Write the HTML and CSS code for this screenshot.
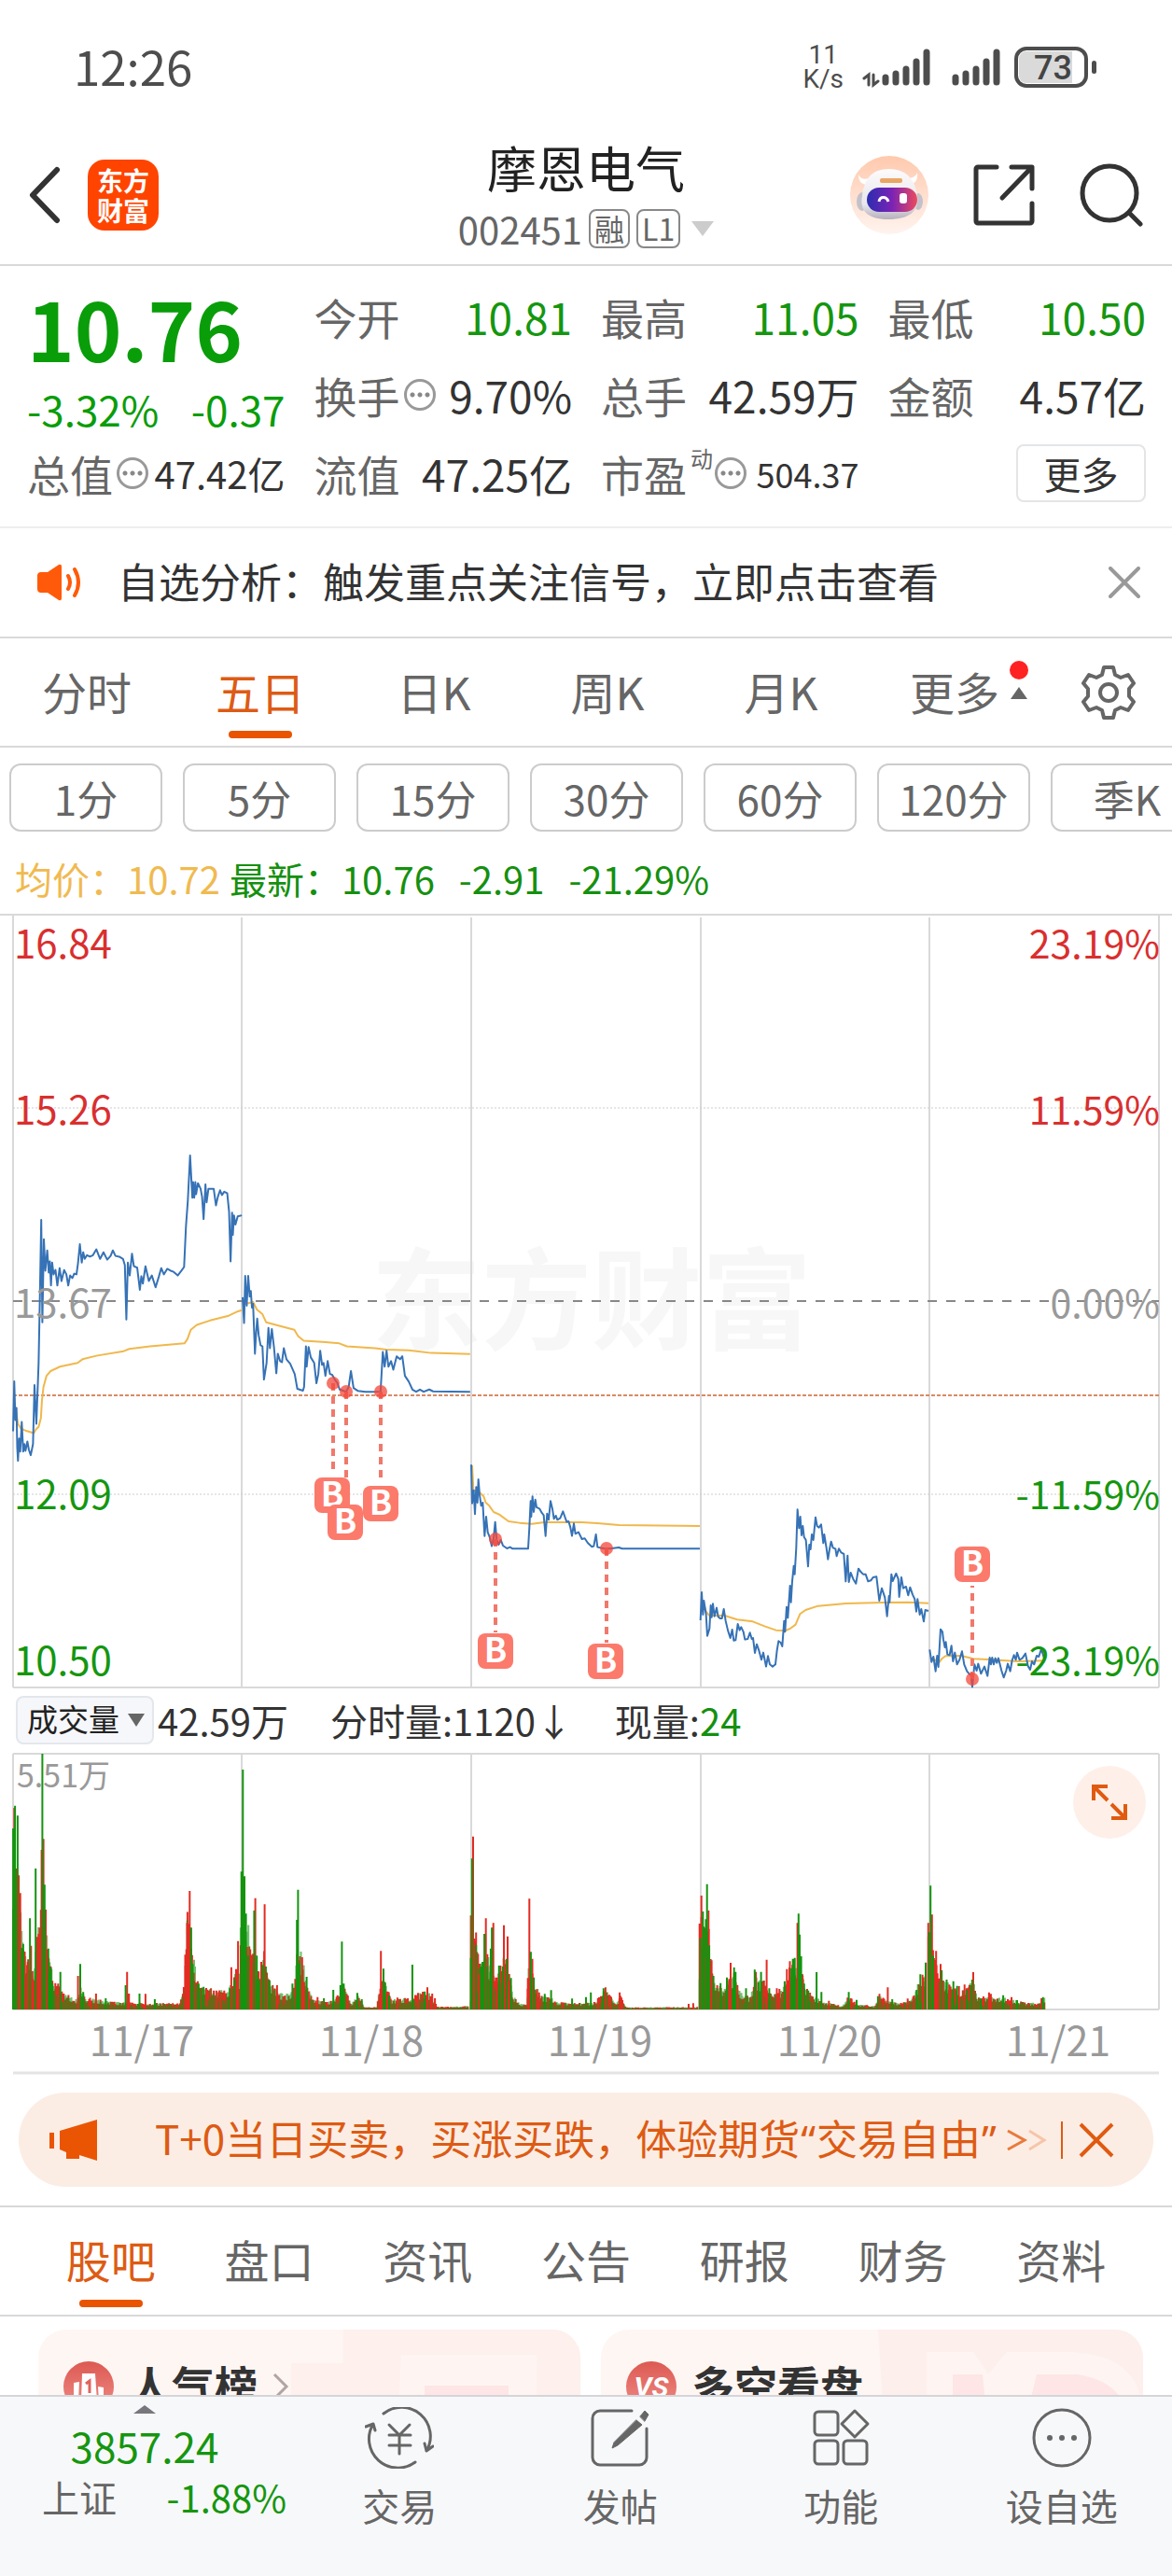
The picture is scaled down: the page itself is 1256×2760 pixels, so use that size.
FILE: index.html
```html
<!DOCTYPE html>
<html lang="zh-CN">
<head>
<meta charset="utf-8">
<meta name="viewport" content="width=device-width, initial-scale=1">
<title>摩恩电气 002451</title>
<link rel="stylesheet" href="styles.css">
</head>
<body>
<div class="app">
  <div class="status">
    <span class="status-time">12:26</span>
    <div class="status-icons">
      <span class="net-speed"><span>11</span><span>K/s</span></span>
      <svg class="signals" width="148" height="44" viewBox="0 0 148 44" fill="none" stroke="#4d4d4d" stroke-width="7" stroke-linecap="round">
        <path d="M7 41V30l-5 4M12 30v11l5-4" stroke-width="3"/>
        <path d="M25 38v-5M36 38v-9M47 38V24M58 38V16M69 38V6M100 38v-5M111 38v-9M122 38V24M133 38V16M144 38V6"/>
      </svg>
      <span class="battery"><span class="battery-level">73</span></span>
    </div>
  </div>

  <header class="header">
    <div class="header-left">
      <button class="icon-btn" aria-label="返回">
        <svg width="34" height="62" viewBox="0 0 34 62" fill="none" stroke="#333" stroke-width="6" stroke-linecap="round" stroke-linejoin="round"><path d="M30 4 4 31l26 27"/></svg>
      </button>
      <a class="logo" href="#home"><span>东方</span><span>财富</span></a>
    </div>
    <div class="title">
      <h1>摩恩电气</h1>
      <div class="code"><span>002451</span><span class="badge">融</span><span class="badge">L1</span><i class="tri-down code-tri"></i></div>
    </div>
    <div class="header-right">
      <button class="icon-btn" aria-label="智能助手">
        <svg width="84" height="84" viewBox="0 0 84 84">
          <defs>
            <linearGradient id="halo" x1="0" y1="0" x2="0" y2="1"><stop offset="0" stop-color="#ffc9ad"/><stop offset="1" stop-color="#fff4ef"/></linearGradient>
            <linearGradient id="visor"><stop offset="0" stop-color="#2b2db0"/><stop offset=".5" stop-color="#7b23b5"/><stop offset="1" stop-color="#ec4a5c"/></linearGradient>
            <linearGradient id="helmet" x1="0" y1="0" x2="0" y2="1"><stop offset="0" stop-color="#fdfbfb"/><stop offset=".7" stop-color="#e9e6ec"/><stop offset="1" stop-color="#b5b1bd"/></linearGradient>
          </defs>
          <circle cx="42" cy="42" r="42" fill="url(#halo)"/>
          <path d="M9 20c0 7 3 11 10 11l5-8c-8 3-13 2-15-3zM72 18c1 7-2 12-8 13l-7-8c8 2 13 0 15-5z" fill="#fff"/>
          <ellipse cx="13" cy="49" rx="6" ry="10" fill="#c4c1cb"/><ellipse cx="73" cy="49" rx="5" ry="9" fill="#c4c1cb"/>
          <path d="M42 14c20 0 29 14 30 30 2 15-8 24-31 24S10 58 13 43c2-18 10-29 29-29z" fill="url(#helmet)"/>
          <rect x="32" y="24" width="24" height="5" rx="2" fill="#e9a765"/>
          <rect x="18" y="34" width="54" height="26" rx="13" fill="url(#visor)"/>
          <path d="M31 49c1-6 8-6 10 0" fill="none" stroke="#fff" stroke-width="3"/><rect x="53" y="40" width="8" height="11" rx="3" fill="#fff"/>
        </svg>
      </button>
      <button class="icon-btn" aria-label="分享">
        <svg width="66" height="66" viewBox="0 0 66 66" fill="none" stroke="#333" stroke-width="5" stroke-linecap="round" stroke-linejoin="round"><path d="M25 3H5a2 2 0 0 0-2 2v56a2 2 0 0 0 2 2h56a2 2 0 0 0 2-2V42M41 3h22v23M62 4 31 36"/></svg>
      </button>
      <button class="icon-btn" aria-label="搜索">
        <svg width="68" height="68" viewBox="0 0 68 68" fill="none" stroke="#333" stroke-width="5" stroke-linecap="round"><circle cx="32" cy="32" r="29"/><path d="m53 53 12 12"/></svg>
      </button>
    </div>
  </header>

  <main class="main">
    <section class="quote">
      <div class="quote-price"><strong>10.76</strong><p><span>-3.32%</span><span>-0.37</span></p></div>
      <div class="cell"><span class="label">今开</span><span class="green">10.81</span></div>
      <div class="cell"><span class="label">最高</span><span class="green">11.05</span></div>
      <div class="cell"><span class="label">最低</span><span class="green">10.50</span></div>
      <div class="cell"><span class="label">换手<i class="dots"></i></span><span>9.70%</span></div>
      <div class="cell"><span class="label">总手</span><span>42.59万</span></div>
      <div class="cell"><span class="label">金额</span><span>4.57亿</span></div>
      <div class="cell"><span class="label">总值<i class="dots"></i></span><span class="mid">47.42亿</span></div>
      <div class="cell"><span class="label">流值</span><span>47.25亿</span></div>
      <div class="cell"><span class="label">市盈<sup>动</sup><i class="dots"></i></span><span class="small">504.37</span></div>
      <div class="cell cell-end"><button class="more-btn">更多</button></div>
    </section>

    <section class="notice">
      <svg width="50" height="40" viewBox="0 0 50 40" fill="none" stroke="#ff5a0a" stroke-width="4" stroke-linecap="round"><path d="M2 13q0-4 4-4h7L25 1q3-1 3 2v34q0 3-3 2l-12-8H6q-4 0-4-4z" fill="#ff5a0a" stroke="none"/><path d="M35 13q4 7 0 14M42 6q8 14 0 28"/></svg>
      <p>自选分析：触发重点关注信号，立即点击查看</p>
      <button class="icon-btn" aria-label="关闭"><svg width="34" height="34" viewBox="0 0 34 34" stroke="#999" stroke-width="4" stroke-linecap="round"><path d="m2 2 30 30M32 2 2 32"/></svg></button>
    </section>

    <nav class="periods">
      <a href="#m">分时</a><a href="#5d" class="active">五日</a><a href="#d">日K</a><a href="#w">周K</a><a href="#mo">月K</a>
      <a href="#more" class="has-dot">更多<i class="tri-up"></i></a>
      <button class="icon-btn gear" aria-label="设置">
        <svg width="60" height="60" viewBox="0 0 60 60" fill="none" stroke="#666" stroke-width="4" stroke-linejoin="round"><path d="M25 3h10l2 8 6 3 8-3 6 9-5 6v8l5 6-6 9-8-3-6 3-2 8H25l-2-8-6-3-8 3-6-9 5-6v-8l-5-6 6-9 8 3 6-3z"/><circle cx="30" cy="30" r="9"/></svg>
      </button>
    </nav>

    <div class="minutes">
      <button>1分</button><button>5分</button><button>15分</button><button>30分</button><button>60分</button><button>120分</button><button>季K</button>
    </div>

    <p class="legend"><span class="avg">均价：10.72</span><span>最新：10.76</span><span>-2.91</span><span>-21.29%</span></p>

    <svg class="chart" viewBox="0 0 1256 830" role="img" aria-label="五日走势">
      <text class="watermark" x="398" y="458">东方财富</text>
      <path class="frame" d="M0 1H1256M14 829H1242M14 1V829M1242 1V829M259 4V829M505 4V829M751 4V829M996 4V829"/>
      <path class="dotted" d="M14 208H1242M14 622H1242"/>
      <path class="zero" d="M14 415H1242"/>
      <path class="cost" d="M14 516H1242"/>
      <g class="avg-line">
        <path transform="translate(0 -9) scale(.4018 .3954)" d="M41 1360 48 1405 56 1418 70 1424 90 1430 96 1420 103 1413 109 1390 112 1340 116 1305 124 1275 135 1262 160 1250 207 1240 220 1230 260 1220 330 1208 345 1202 400 1195 492 1187 500 1175 509 1150 525 1137 560 1125 610 1112 635 1100 645 1097M655 1080 675 1075 685 1095 700 1108 710 1130 740 1138 785 1150 795 1167 810 1180 860 1183 905 1187 925 1195 1000 1200 1030 1204 1090 1206 1150 1213 1254 1216"/>
        <path transform="translate(490 321) scale(.3333)" d="M48 810 52 890 75 900 85 910 92 930 103 940 117 960 135 968 165 990 200 995 240 998 280 993 400 993 450 996 520 1002 780 1005"/>
        <path transform="translate(740 521) scale(.3333)" d="M40 650 50 680 60 693 110 693 150 706 200 712 240 728 275 740 305 741 320 735 338 722 345 705 352 688 370 675 410 662 500 654 620 651 700 650 765 653M775 830 800 843 808 832 820 823 870 822 910 832 970 835 1050 840 1137 838"/>
      </g>
      <g class="price-line">
        <path transform="translate(0 -9) scale(.4018 .3954)" d="M35 1425 38 1290 41 1395 44 1362 46 1470 48 1505 51 1445 54 1480 58 1400 62 1480 65 1460 68 1478 73 1453 77 1475 82 1490 88 1460 92 1300 97 1405 103 1240 106 1080 110 852 113 1130 117 905 121 990 126 935 130 995 133 965 136 1030 139 968 143 1000 148 988 153 1030 159 983 164 1018 171 988 177 1000 182 1030 187 1003 193 1010 198 998 204 1000 208 970 213 918 218 968 222 940 226 958 232 948 240 952 248 948 257 932 267 958 276 940 286 960 295 950 301 935 308 950 318 952 328 958 333 975 337 1122 341 968 346 1003 352 944 357 978 366 982 373 1042 377 1005 381 1025 388 978 397 1018 405 1003 415 1035 424 1005 430 983 437 1000 446 985 455 990 463 993 474 1003 484 990 491 980 496 870 501 800 507 678 513 792 515 750 518 792 521 750 523 783 528 753 535 768 539 790 543 850 548 756 551 805 556 768 570 768 576 813 581 790 587 772 592 785 598 776 606 780 611 830 615 965 619 833 621 893 624 840 628 865 634 843 645 840M647 1062 651 1132 654 1004 658 1085 662 1004 666 1060 669 1045 672 1090 675 1080 680 1215 683 1160 686 1120 690 1165 695 1192 700 1195 704 1285 711 1240 716 1145 720 1200 725 1148 731 1200 737 1268 741 1215 747 1235 752 1238 757 1200 764 1230 774 1242 786 1270 793 1310 808 1315 811 1305 816 1195 818 1250 823 1197 829 1225 838 1240 844 1295 849 1270 854 1207 859 1245 863 1240 868 1275 874 1235 880 1270 886 1272 893 1285 900 1295 906 1312 923 1318 930 1305 936 1262 943 1308 955 1316 975 1318 1015 1318 1021 1210 1026 1250 1031 1207 1036 1250 1043 1235 1049 1258 1058 1222 1067 1230 1073 1222 1080 1275 1090 1290 1100 1312 1110 1318 1120 1312 1130 1318 1145 1312 1155 1317 1254 1318"/>
        <path transform="translate(490 321) scale(.3333)" d="M45 808 48 932 53 890 57 967 61 880 65 930 68 855 72 905 77 940 82 930 88 1037 93 975 98 1025 104 1040 111 1070 117 1045 122 992 127 1050 133 1065 140 1050 147 1068 160 1077 170 1073 178 1078 228 1078 232 1010 236 925 238 975 242 910 246 960 251 920 255 945 265 950 272 963 278 970 284 1037 289 965 294 985 300 925 306 950 311 982 317 972 322 985 331 980 340 958 347 978 352 992 358 990 364 1010 369 1037 375 997 380 1030 390 1025 401 1047 410 1045 420 1060 433 1072 439 1070 446 1032 451 1073 470 1077 490 1078 520 1074 530 1078 780 1078"/>
        <path transform="translate(740 521) scale(.3333)" d="M32 708 36 618 40 690 43 645 50 690 54 758 61 735 65 660 68 698 72 655 77 695 84 668 89 697 95 702 101 702 107 672 113 710 120 740 128 765 134 738 139 773 145 772 152 720 158 740 163 730 170 745 175 770 184 768 191 748 197 768 201 765 207 813 213 785 220 805 228 835 234 812 243 857 249 823 255 850 264 857 273 850 278 805 283 775 290 780 295 792 301 710 304 745 309 665 313 700 320 597 323 650 327 583 332 533 335 560 340 475 344 352 349 412 353 375 357 435 361 405 365 440 371 450 378 535 382 465 386 480 390 432 395 450 402 377 407 405 413 410 420 400 427 460 430 432 437 475 442 512 447 480 452 455 458 475 466 478 470 502 477 478 484 490 493 495 499 583 505 500 509 585 515 555 523 575 532 590 540 542 548 553 555 560 563 560 571 583 580 580 587 570 598 568 607 645 615 605 625 635 632 695 638 630 640 650 646 560 650 582 661 558 668 575 671 633 678 570 684 605 693 600 700 628 706 602 714 625 721 640 726 680 730 640 737 690 742 672 750 712 755 675 765 678M769 802 775 842 781 825 788 872 793 822 797 858 804 737 810 745 813 770 818 795 821 778 826 818 833 820 839 790 844 840 850 812 857 850 865 835 873 808 880 850 889 872 896 880 902 885 906 922 913 850 920 870 925 848 934 880 945 857 955 887 962 828 966 850 970 828 975 850 980 830 985 845 990 830 1000 870 1007 892 1015 870 1020 848 1028 872 1034 837 1040 820 1046 835 1050 812 1058 835 1067 830 1077 815 1085 855 1092 867 1098 840 1105 850 1113 822 1120 825 1128 800 1137 830"/>
      </g>
      <g class="stems"><path d="M357 503V600M371 512V630M408 512V610M531 670V770M650 680V781M1042 820V720"/></g>
      <g class="points"><circle cx="357" cy="503" r="7"/><circle cx="371" cy="512" r="7"/><circle cx="408" cy="512" r="7"/><circle cx="531" cy="670" r="7"/><circle cx="650" cy="680" r="7"/><circle cx="1042" cy="820" r="7"/></g>
      <g class="tags">
        <rect x="337" y="604" width="38" height="38" rx="8"/><text x="356" y="635">B</text>
        <rect x="351" y="633" width="38" height="38" rx="8"/><text x="370" y="664">B</text>
        <rect x="389" y="613" width="38" height="38" rx="8"/><text x="408" y="644">B</text>
        <rect x="512" y="771" width="38" height="38" rx="8"/><text x="531" y="802">B</text>
        <rect x="630" y="782" width="38" height="38" rx="8"/><text x="649" y="813">B</text>
        <rect x="1023" y="678" width="38" height="38" rx="8"/><text x="1042" y="709">B</text>
      </g>
      <g class="axis">
        <text class="up" x="15" y="48">16.84</text><text class="up" x="15" y="226">15.26</text><text class="flat" x="15" y="433">13.67</text><text class="down" x="15" y="638">12.09</text><text class="down" x="15" y="816">10.50</text>
      </g>
      <g class="axis-pct" text-anchor="end">
        <text class="up" x="1243" y="48">23.19%</text><text class="up" x="1243" y="226">11.59%</text><text class="flat" x="1243" y="433">0.00%</text><text class="down" x="1243" y="638">-11.59%</text><text class="down" x="1243" y="816">-23.19%</text>
      </g>
    </svg>

    <div class="volume-head">
      <span class="picker"><select aria-label="副图指标"><option>成交量</option></select><i class="tri-down"></i></span>
      <span class="vol-total">42.59万</span><span class="vol-min">分时量:1120↓</span><span>现量:<b>24</b></span>
    </div>

    <div class="volume">
      <svg class="chart" viewBox="0 0 1256 345" role="img" aria-label="成交量">
        <path class="frame" d="M14 1H1242M14 275H1242M14 1V275M1242 1V275M259 1V275M505 1V275M751 1V275M996 1V275"/>
        <path class="rule" d="M14 343H1242"/>
        <text class="vol-max" x="18" y="37">5.51万</text>
        <path id="bars-red" class="bars red"/><path id="bars-green" class="bars grn"/>
        <path id="peaks-red" class="bars red"/><path id="peaks-green" class="bars grn"/>
        <g class="dates" text-anchor="middle"><text x="152" y="325">11/17</text><text x="398" y="325">11/18</text><text x="643" y="325">11/19</text><text x="889" y="325">11/20</text><text x="1134" y="325">11/21</text></g>
      </svg>
      <button class="expand" aria-label="全屏"><svg width="40" height="40" viewBox="0 0 40 40" fill="none" stroke="#e05a10" stroke-width="4"><path d="M18 3H3v15M3 3l15 15M22 37h15V22M37 37 22 22"/></svg></button>
    </div>

    <section class="promo">
      <div class="promo-bar">
        <svg width="54" height="46" viewBox="0 0 54 46" fill="#ea5504"><path d="M0 15h5v17H0zM11 13 51 1v44l-19-6v4H18v-7l-7-3z"/></svg>
        <p>T+0当日买卖，买涨买跌，体验期货<span class="q">“</span>交易自由<span class="q">”</span></p>
        <svg width="44" height="24" viewBox="0 0 44 24" fill="none" stroke="#ea7a3c" stroke-width="3"><path d="m2 2 18 10L2 22"/><path d="m25 2 16 10-16 10" opacity=".35"/></svg>
        <i class="promo-sep"></i>
        <button class="icon-btn" aria-label="关闭"><svg width="38" height="38" viewBox="0 0 38 38" stroke="#e05a10" stroke-width="4"><path d="m2 2 34 34M36 2 2 36"/></svg></button>
      </div>
    </section>

    <nav class="sections">
      <a href="#guba" class="active">股吧</a><a href="#pankou">盘口</a><a href="#news">资讯</a><a href="#notice">公告</a><a href="#report">研报</a><a href="#finance">财务</a><a href="#info">资料</a>
    </nav>

    <section class="cards">
      <a class="card" href="#rank">
        <svg class="card-art" width="310" height="130" viewBox="0 0 310 130"><path d="M56 0h254v130H0V36h56z" fill="#fdf0ed"/><path d="M118 27h145v103H113z" fill="#fef5f2"/><path d="M143 60h90v70h-90z" fill="#fde6e5"/></svg>
        <svg width="54" height="54" viewBox="0 0 54 54"><defs><linearGradient id="ball" x1="0" y1="0" x2="0" y2="1"><stop offset="0" stop-color="#dc5a52"/><stop offset="1" stop-color="#f08d88"/></linearGradient></defs><circle cx="27" cy="27" r="27" fill="url(#ball)"/><path d="M20 13h14l2 30H19zM11 23l6-1-1 21h-5zM37 27l6 1v15h-5z" fill="#fff"/><path d="m24 24 4-3v13" fill="none" stroke="#e0645c" stroke-width="3"/></svg>
        <h2>人气榜</h2>
        <svg width="18" height="30" viewBox="0 0 18 30" fill="none" stroke="#b0a5a3" stroke-width="3"><path d="m2 2 13 13L2 28"/></svg>
      </a>
      <a class="card" href="#vs">
        <svg class="card-art" width="284" height="130" viewBox="0 0 284 130"><path d="M0 0h284v130H8z" fill="#fdefec"/><path d="M52 24h50l16 24 20-24h60q86 0 86 70v36H52z" fill="#fef5f2"/><path d="M80 48h32l8 82H80zM150 130l20-82h44q50 8 54 50l-8 32z" fill="#fde6e5"/></svg>
        <svg width="54" height="54" viewBox="0 0 54 54"><circle cx="27" cy="27" r="27" fill="url(#ball)"/><text class="vs" x="27" y="38" text-anchor="middle">VS</text></svg>
        <h2>多空看盘</h2>
      </a>
    </section>
  </main>

  <footer class="bottom">
    <a class="index" href="#index"><i class="tri-up"></i><b>3857.24</b><span class="index-row"><span>上证</span><em>-1.88%</em></span></a>
    <a class="action" href="#trade"><svg width="74" height="66" viewBox="0 0 74 66" fill="none" stroke="#666" stroke-width="3" stroke-linecap="round" stroke-linejoin="round"><path d="M20 7A31 31 0 0 1 66 47l7-5M66 47 64 39M54 59A31 31 0 0 1 9 18L1 21M9 18l2 7"/><path d="m26 19 11 11 11-11M37 30v20M26 30h23M26 41h23"/></svg>交易</a>
    <a class="action" href="#post"><svg width="66" height="66" viewBox="0 0 66 66" fill="none" stroke="#666" stroke-width="3" stroke-linecap="round"><path d="M45 4H11a8 8 0 0 0-8 8v42a8 8 0 0 0 8 8h42a8 8 0 0 0 8-8V23"/><path d="m50 14 6 5-26 22-6 3 2-6zM54 10l5-6 4 4-4 7z" fill="#666" stroke-width="1"/></svg>发帖</a>
    <a class="action" href="#tools"><svg width="66" height="66" viewBox="0 0 66 66" fill="none" stroke="#666" stroke-width="3" stroke-linejoin="round"><rect x="5" y="5" width="25" height="25" rx="4"/><rect x="5" y="36" width="25" height="25" rx="4"/><rect x="36" y="36" width="25" height="25" rx="4"/><path d="m48 4 14 14-14 14-14-14z"/></svg>功能</a>
    <a class="action" href="#watch"><svg width="66" height="66" viewBox="0 0 66 66" fill="none" stroke="#666" stroke-width="3"><circle cx="33" cy="33" r="30"/><g fill="#666" stroke="none"><circle cx="20" cy="33" r="3"/><circle cx="33" cy="33" r="3"/><circle cx="46" cy="33" r="3"/></g></svg>设自选</a>
  </footer>
</div>
<script src="script.js"></script>
</body>
</html>
```
FILE: styles.css
```css
* { box-sizing: border-box; }
body, h1, h2, p { margin: 0; }
body { background: #fff; color: #333; font: 46px/60px "Noto Sans CJK SC", "Noto Sans", sans-serif; }
a { color: inherit; text-decoration: none; }
button, select { font: inherit; color: inherit; }
svg { display: block; flex: none; }
i, em { font-style: normal; }
.icon-btn { display: block; padding: 0; border: 0; background: none; }
.app { display: flex; flex-direction: column; height: 100vh; }
.tri-down, .tri-up { display: inline-block; border: solid transparent; }
.tri-down { border-width: 14px 9px 0; border-top-color: #666; }
.tri-up { border-width: 0 9px 13px; border-bottom-color: #666; }

/* status bar */
.status { flex: none; display: flex; justify-content: space-between; align-items: center; height: 140px; padding: 0 90px 0 79px; color: #4d4d4d; }
.status-time { font-size: 51px; }
.status-icons { display: flex; align-items: center; padding-top: 4px; }
.net-speed { display: flex; flex-direction: column; align-items: center; margin-right: 20px; font: 28px/26px Roboto, sans-serif; }
.signals { margin-right: 15px; }
.battery { position: relative; width: 79px; height: 44px; padding: 1px; border: 4px solid #4d4d4d; border-radius: 13px; }
.battery::after { content: ""; position: absolute; right: -13px; top: 11px; width: 5px; height: 14px; border-radius: 3px; background: #4d4d4d; }
.battery-level { display: block; width: 57px; height: 34px; padding-left: 16px; border-radius: 8px 0 0 8px; background: #dadada; font: 500 36px/36px Roboto, sans-serif; color: #444; }

/* header */
.header { flex: none; display: grid; grid-template-columns: 1fr auto 1fr; align-items: center; height: 145px; padding: 0 31px 6px 31px; border-bottom: 2px solid #d9d9d9; }
.header-left { display: flex; align-items: center; gap: 29px; }
.header-right { display: flex; align-items: center; justify-content: flex-end; gap: 48px; }
.logo { display: flex; flex-direction: column; align-items: center; justify-content: center; width: 76px; height: 76px; border-radius: 18px; background: #ff4400; color: #fff; font-size: 28px; line-height: 32px; font-weight: 700; }
.title { text-align: center; }
.title h1 { font-size: 53px; line-height: 56px; font-weight: 400; color: #222; }
.code { display: flex; align-items: center; gap: 7px; margin-top: 16px; font-size: 40px; line-height: 44px; color: #666; }
.badge { height: 42px; padding: 0 4px; border: 2px solid #888; border-radius: 8px; font-size: 32px; line-height: 36px; }
.code-tri { margin-left: 5px; border-width: 16px 12px 0; border-top-color: #ccc; }

/* quote */
.main { flex: 1; min-height: 0; overflow: hidden; }
.quote { display: grid; grid-template-columns: repeat(4, minmax(0, 1fr)); grid-auto-rows: 84px; column-gap: 31px; padding: 12px 28px 15px 29px; border-bottom: 2px solid #eee; }
.quote-price { grid-row: span 2; padding-top: 4px; color: #0a9d0a; }
.quote-price strong { display: block; font-size: 86px; line-height: 100px; }
.quote-price p { display: flex; justify-content: space-between; margin-top: 11px; font-size: 44px; line-height: 52px; }
.cell { display: flex; align-items: center; justify-content: space-between; white-space: nowrap; }
.cell-end { justify-content: flex-end; }
.label { display: flex; align-items: center; gap: 4px; color: #666; }
.green { color: #15960f; }
.mid { font-size: 40px; }
.small { font-size: 36px; }
.label sup { align-self: flex-start; margin-right: -2px; font-size: 24px; line-height: 28px; }
.dots { width: 34px; height: 34px; border: 3px solid #999; border-radius: 50%; background: radial-gradient(circle, #888 2px, transparent 3px) center / 8px 8px repeat-x; background-origin: content-box; padding: 0 2px; background-clip: content-box; }
.more-btn { width: 139px; height: 62px; padding: 0; border: 2px solid #e3e5e6; border-radius: 8px; background: #fff; font-size: 40px; line-height: 50px; }

/* notice */
.notice { display: flex; align-items: center; height: 118px; padding: 0 34px 0 38px; border-bottom: 2px solid #d9d9d9; }
.notice p { flex: 1; margin-left: 38px; font-size: 44px; line-height: 56px; padding-bottom: 4px; }

/* period tabs */
.periods { display: flex; align-items: center; height: 117px; padding-right: 38px; border-bottom: 2px solid #d9d9d9; color: #666; font-size: 48px; }
.periods a { position: relative; flex: 1; height: 115px; text-align: center; line-height: 112px; }
.active { color: #dd5b14; }
.active::after { content: ""; position: absolute; left: 50%; bottom: 8px; width: 68px; height: 8px; margin-left: -34px; border-radius: 4px; background: #e85400; }
.has-dot .tri-up { position: absolute; right: 15px; top: 52px; }
.has-dot::after { content: ""; position: absolute; right: 14px; top: 24px; width: 20px; height: 20px; border-radius: 50%; background: #f22; }
.gear { margin-left: 42px; }
.minutes { display: flex; gap: 22px; padding: 17px 10px; overflow: hidden; }
.minutes button { flex: none; width: 164px; height: 73px; padding: 0; border: 2px solid #ccc; border-radius: 12px; background: #fff; color: #666; font-size: 44px; line-height: 60px; }
.legend { display: flex; gap: 26px; padding-left: 16px; font-size: 40px; line-height: 66px; height: 71px; color: #15900f; }
.legend .avg { margin-right: -16px; color: #f0ba50; }

/* charts */
.chart { width: 100%; height: auto; }
.frame { fill: none; stroke: #d9d9d9; stroke-width: 2; }
.rule { stroke: #e4e4e4; stroke-width: 3; }
.dotted { stroke: #ccc; stroke-width: 1; stroke-dasharray: 2 2; }
.zero { stroke: #888; stroke-width: 2; stroke-dasharray: 10 10; }
.cost { stroke: #d98a64; stroke-width: 2; stroke-dasharray: 4 2; }
.watermark { font-size: 118px; font-weight: 700; fill: #f7f7f7; }
.avg-line path, .price-line path { fill: none; stroke-width: 2; stroke-linejoin: round; vector-effect: non-scaling-stroke; }
.avg-line { stroke: #f0b84c; }
.price-line { stroke: #3672b6; }
.stems { stroke: #f0796c; stroke-width: 4; stroke-dasharray: 8 6; }
.points { fill: #f4473a; opacity: .75; }
.tags rect { fill: #fb7a6c; }
.tags text { font-size: 36px; font-weight: 700; fill: #fff; text-anchor: middle; }
.axis { font-size: 42px; }
.axis-pct { font-size: 41px; }
.up { fill: #d92f2f; }
.flat { fill: #999; }
.down { fill: #15960f; }

.volume-head { display: flex; align-items: center; height: 69px; padding: 0 0 2px 17px; font-size: 40px; line-height: 50px; white-space: nowrap; }
.volume-head b { font-weight: 400; color: #15900f; }
.vol-total { margin: 0 45px 0 4px; }
.vol-min { margin-right: 45px; }
.picker { position: relative; display: block; height: 52px; border: 2px solid #e4e7eb; border-radius: 8px; background: #f6f7fa; }
.picker select { display: block; width: 144px; height: 48px; padding: 0 0 4px 10px; border: 0; background: none; appearance: none; font-size: 33px; line-height: 44px; color: #222; }
.picker .tri-down { position: absolute; right: 8px; top: 17px; }
.volume { position: relative; }
.vol-max { font-size: 34px; fill: #999; }
.bars { fill: none; stroke-width: 2; }
.red { stroke: #e32b22; }
.grn { stroke: #14930f; }
#bars-green { opacity: .6; }
.dates { font-size: 43px; fill: #999; }
.expand { position: absolute; right: 28px; top: 14px; display: flex; align-items: center; justify-content: center; width: 78px; height: 78px; padding: 0; border: 0; border-radius: 50%; background: #fef0e8; }

/* promo */
.promo { padding: 19px 20px 20px; border-bottom: 2px solid #d9d9d9; }
.promo-bar { display: flex; align-items: center; height: 101px; padding: 0 42px 0 33px; border-radius: 50px; background: #fcede4; color: #dd5b14; font-size: 44px; white-space: nowrap; }
.promo-bar p { margin: 0 auto 0 59px; padding-bottom: 4px; line-height: 56px; }
.q { padding: 0 1px; font-family: "Noto Sans", sans-serif; }
.promo-sep { flex: none; width: 2px; height: 40px; margin: 0 17px 0 15px; background: #dd5b14; }

/* section tabs */
.sections { display: flex; height: 117px; padding: 0 34px; border-bottom: 2px solid #d9d9d9; color: #666; font-size: 48px; line-height: 111px; text-align: center; }
.sections a { position: relative; flex: 1; height: 115px; }
.cards { display: flex; gap: 22px; padding: 14px 31px 0 41px; }
.card { position: relative; flex: 1; display: flex; align-items: center; height: 200px; padding: 0 0 78px 27px; border-radius: 30px; background: #fef6f3; overflow: hidden; }
.card h2 { position: relative; margin: 0 16px; padding-bottom: 6px; font-size: 46px; line-height: 54px; font-weight: 700; }
.card-art { position: absolute; right: 0; top: 0; }
.vs { font: italic 700 30px Roboto, sans-serif; fill: #fff; }

/* bottom bar */
.bottom { flex: none; display: flex; height: 194px; border-top: 2px solid #d3d5d9; background: #f7f8fa; color: #666; font-size: 40px; line-height: 50px; }
.index { display: flex; flex-direction: column; align-items: center; flex: 0 0 310px; padding-top: 9px; }
.index .tri-up { border-width: 0 12px 9px; border-bottom-color: #77777d; }
.index b { margin-top: 4px; font-size: 44px; line-height: 60px; font-weight: 400; color: #15960f; }
.index-row { display: flex; justify-content: space-between; width: 262px; margin: 0 0 0 42px; }
.index em { color: #15960f; }
.action { flex: 1; display: flex; flex-direction: column; align-items: center; gap: 14px; padding-top: 11px; }
```
FILE: script.js
```js
(() => {
  // Units: 2.489 per chart unit across, 3 per unit up; the zero line is y = 1058.
  const BASE = 1058, CEILING = 236, SX = 2.489, SY = 3, FLOOR = 275;

  const levels = [
    "35,700 60,860 70,930 90,965 110,800 125,870 140,980 165,1015 205,1035 215,1000 230,1030 300,1040 390,1043 480,1043 492,1000 500,830 510,900 525,985 545,1005 600,1015 612,1005 630,960 640,980",
    "642,800 655,820 675,920 692,965 705,920 715,985 745,1018 770,1022 785,1005 795,900 808,935 820,1005 835,1035 880,1040 905,1020 912,990 925,1015 937,1045 955,1025 967,1040 970,1052 1005,1053 1012,1010 1022,980 1045,1035 1095,1030 1130,1015 1145,1020 1160,1040 1167,1052 1250,1050",
    "1256,830 1270,880 1280,945 1300,930 1308,950 1320,985 1345,930 1358,965 1368,1025 1385,1043 1405,1048 1410,960 1424,980 1440,1025 1470,1030 1485,1040 1560,1043 1590,1040 1610,1010 1632,1025 1642,1050 1655,1025 1668,1050 1675,1053 1860,1052",
    "1866,850 1888,830 1898,945 1908,1000 1936,1005 1948,980 1960,970 1970,1010 1986,1025 2003,1028 2013,980 2038,990 2058,1018 2088,1010 2106,960 2128,930 2138,950 2148,1000 2168,1025 2198,1040 2248,1050 2264,1025 2285,1045 2333,1050 2346,1025 2388,1042 2418,1040 2438,1020 2458,980 2470,960",
    "2476,870 2493,930 2508,975 2533,1000 2563,1015 2578,1005 2596,990 2608,1030 2638,1025 2678,1030 2708,1035 2738,1043 2773,1042 2786,1030"
  ];

  const peaks =
    "35,476g 38,410r 40,403g 43,605r 47,435g 50,627r 54,684r 58,860g 62,847g 66,872r 74,905r 80,765g 83,853r 86,935r 90,965r 95,605g 99,825r 103,815r 106,795r 109,738r 111,545r 113,236g 116,510r 119,657g 122,737r 125,865r 129,862g 133,945g 136,923g 140,975g 155,975r 161,937g 208,950r 214,912g 222,1002g 256,1007r 282,1022g 335,980g 339,937r 344,1007r 372,1007g 388,1008r 413,1025g 494,882r 499,780r 503,783r 506,677r 510,795g 514,912g 517,940r 530,975g 543,985g 577,997r 588,1005r 613,990g 617,922r 625,962g 631,930r 635,838r " +
    "644,615g 648,287g 652,630g 656,750g 659,857r 662,885g 667,930r 672,892r 678,740g 681,700r 685,885g 690,960g 697,905r 700,915g 706,720r 709,920g 712,940r 719,965g 739,980r 780,975g 792,770g 795,673g 799,910g 806,890r 811,970r 818,953g 823,1000r 847,1018r 864,1022g 889,995g 908,980g 912,840g 917,975g 927,1015r 953,1005g 965,1025g 1012,1008r 1016,870r 1019,967r 1023,927g 1027,970g 1033,1000r 1038,1012g 1060,1020r 1100,914g 1115,1005r 1133,1000g 1140,987r 1148,1015r 1153,1007r 1160,1022r " +
    "1256,893g 1259,573g 1262,502r 1266,830r 1270,850g 1278,945r 1283,920g 1287,905g 1292,815g 1296,765r 1300,920g 1309,862g 1312,795g 1316,780r 1326,955r 1331,917g 1341,920g 1344,787r 1348,912r 1351,895g 1354,823r 1358,965r 1363,957g 1408,957r 1412,702r 1416,873g 1420,895r 1424,955g 1432,993r 1438,1003r 1453,1008g 1470,996g 1526,1023g 1563,1018g 1576,1003g 1595,1022r 1610,990g 1615,987r 1628,1020r 1653,1003r 1658,1020r 1837,1040r 1849,1038r " +
    "1868,828g 1871,692r 1875,743g 1877,792g 1881,893r 1883,768g 1886,655g 1890,740r 1892,852g 1895,912r 1899,942r 1903,950g 1922,973g 1939,955g 1945,960r 1949,908r 1954,990g 1958,923g 1962,937g 1967,980r 1990,990g 2013,930g 2016,937r 2023,970g 2030,937g 2034,968r 2045,898r 2052,990g 2072,990r 2079,992r 2093,967g 2099,928r 2107,903r 2111,925g 2115,895g 2120,892g 2127,780r 2130,750g 2133,817g 2137,887g 2141,950r 2145,975g 2156,997g 2178,938g 2191,1002g 2211,1030r 2264,1002g 2269,1022r 2285,1027g 2342,1015g 2346,1008r 2368,987r 2380,1025g 2421,1023r 2438,1013r 2445,995g 2455,945g 2463,955r 2469,907g " +
    "2476,780r 2479,810g 2482,660g 2486,753r 2489,885g 2494,905r 2497,870r 2501,960r 2509,912r 2512,932g 2516,965r 2525,962g 2532,978r 2543,967g 2553,982g 2558,983r 2573,978r 2578,995g 2593,962g 2596,938r 2616,1023g 2638,1003r 2643,1008r 2676,1012g 2698,1018r 2713,1028g 2778,1022r 2782,1018g";

  const bar = (x, y) => `M${(x / SX).toFixed(1)} ${FLOOR}V${(FLOOR - (BASE - Math.max(y, CEILING)) / SY).toFixed(1)}`;
  const draw = (id, d) => document.getElementById(id).setAttribute("d", d);

  let seed = 7;
  const random = () => (seed = (seed * 16807) % 2147483647) / 2147483647;

  const low = { r: "", g: "" };
  for (const day of levels) {
    const pts = day.split(" ").map(p => p.split(",").map(Number));
    for (let i = 0; i + 1 < pts.length; i++) {
      const [x0, y0] = pts[i], [x1, y1] = pts[i + 1];
      for (let x = x0; x < x1; x += 2.53) {
        const level = y0 + (y1 - y0) * (x - x0) / (x1 - x0);
        const tall = .9 + random() * .5, short = random() * .8;
        const redFirst = random() < .5;
        low.r += bar(x, BASE - (BASE - level) * (redFirst ? tall : .8));
        low.g += bar(x, BASE - (BASE - level) * (redFirst ? short : tall));
      }
    }
  }
  draw("bars-red", low.r);
  draw("bars-green", low.g);

  const high = { r: "", g: "" };
  for (const p of peaks.split(" ")) {
    const [x, y] = p.split(",");
    high[y.slice(-1)] += bar(Number(x), parseInt(y, 10));
  }
  draw("peaks-red", high.r);
  draw("peaks-green", high.g);
})();
```
